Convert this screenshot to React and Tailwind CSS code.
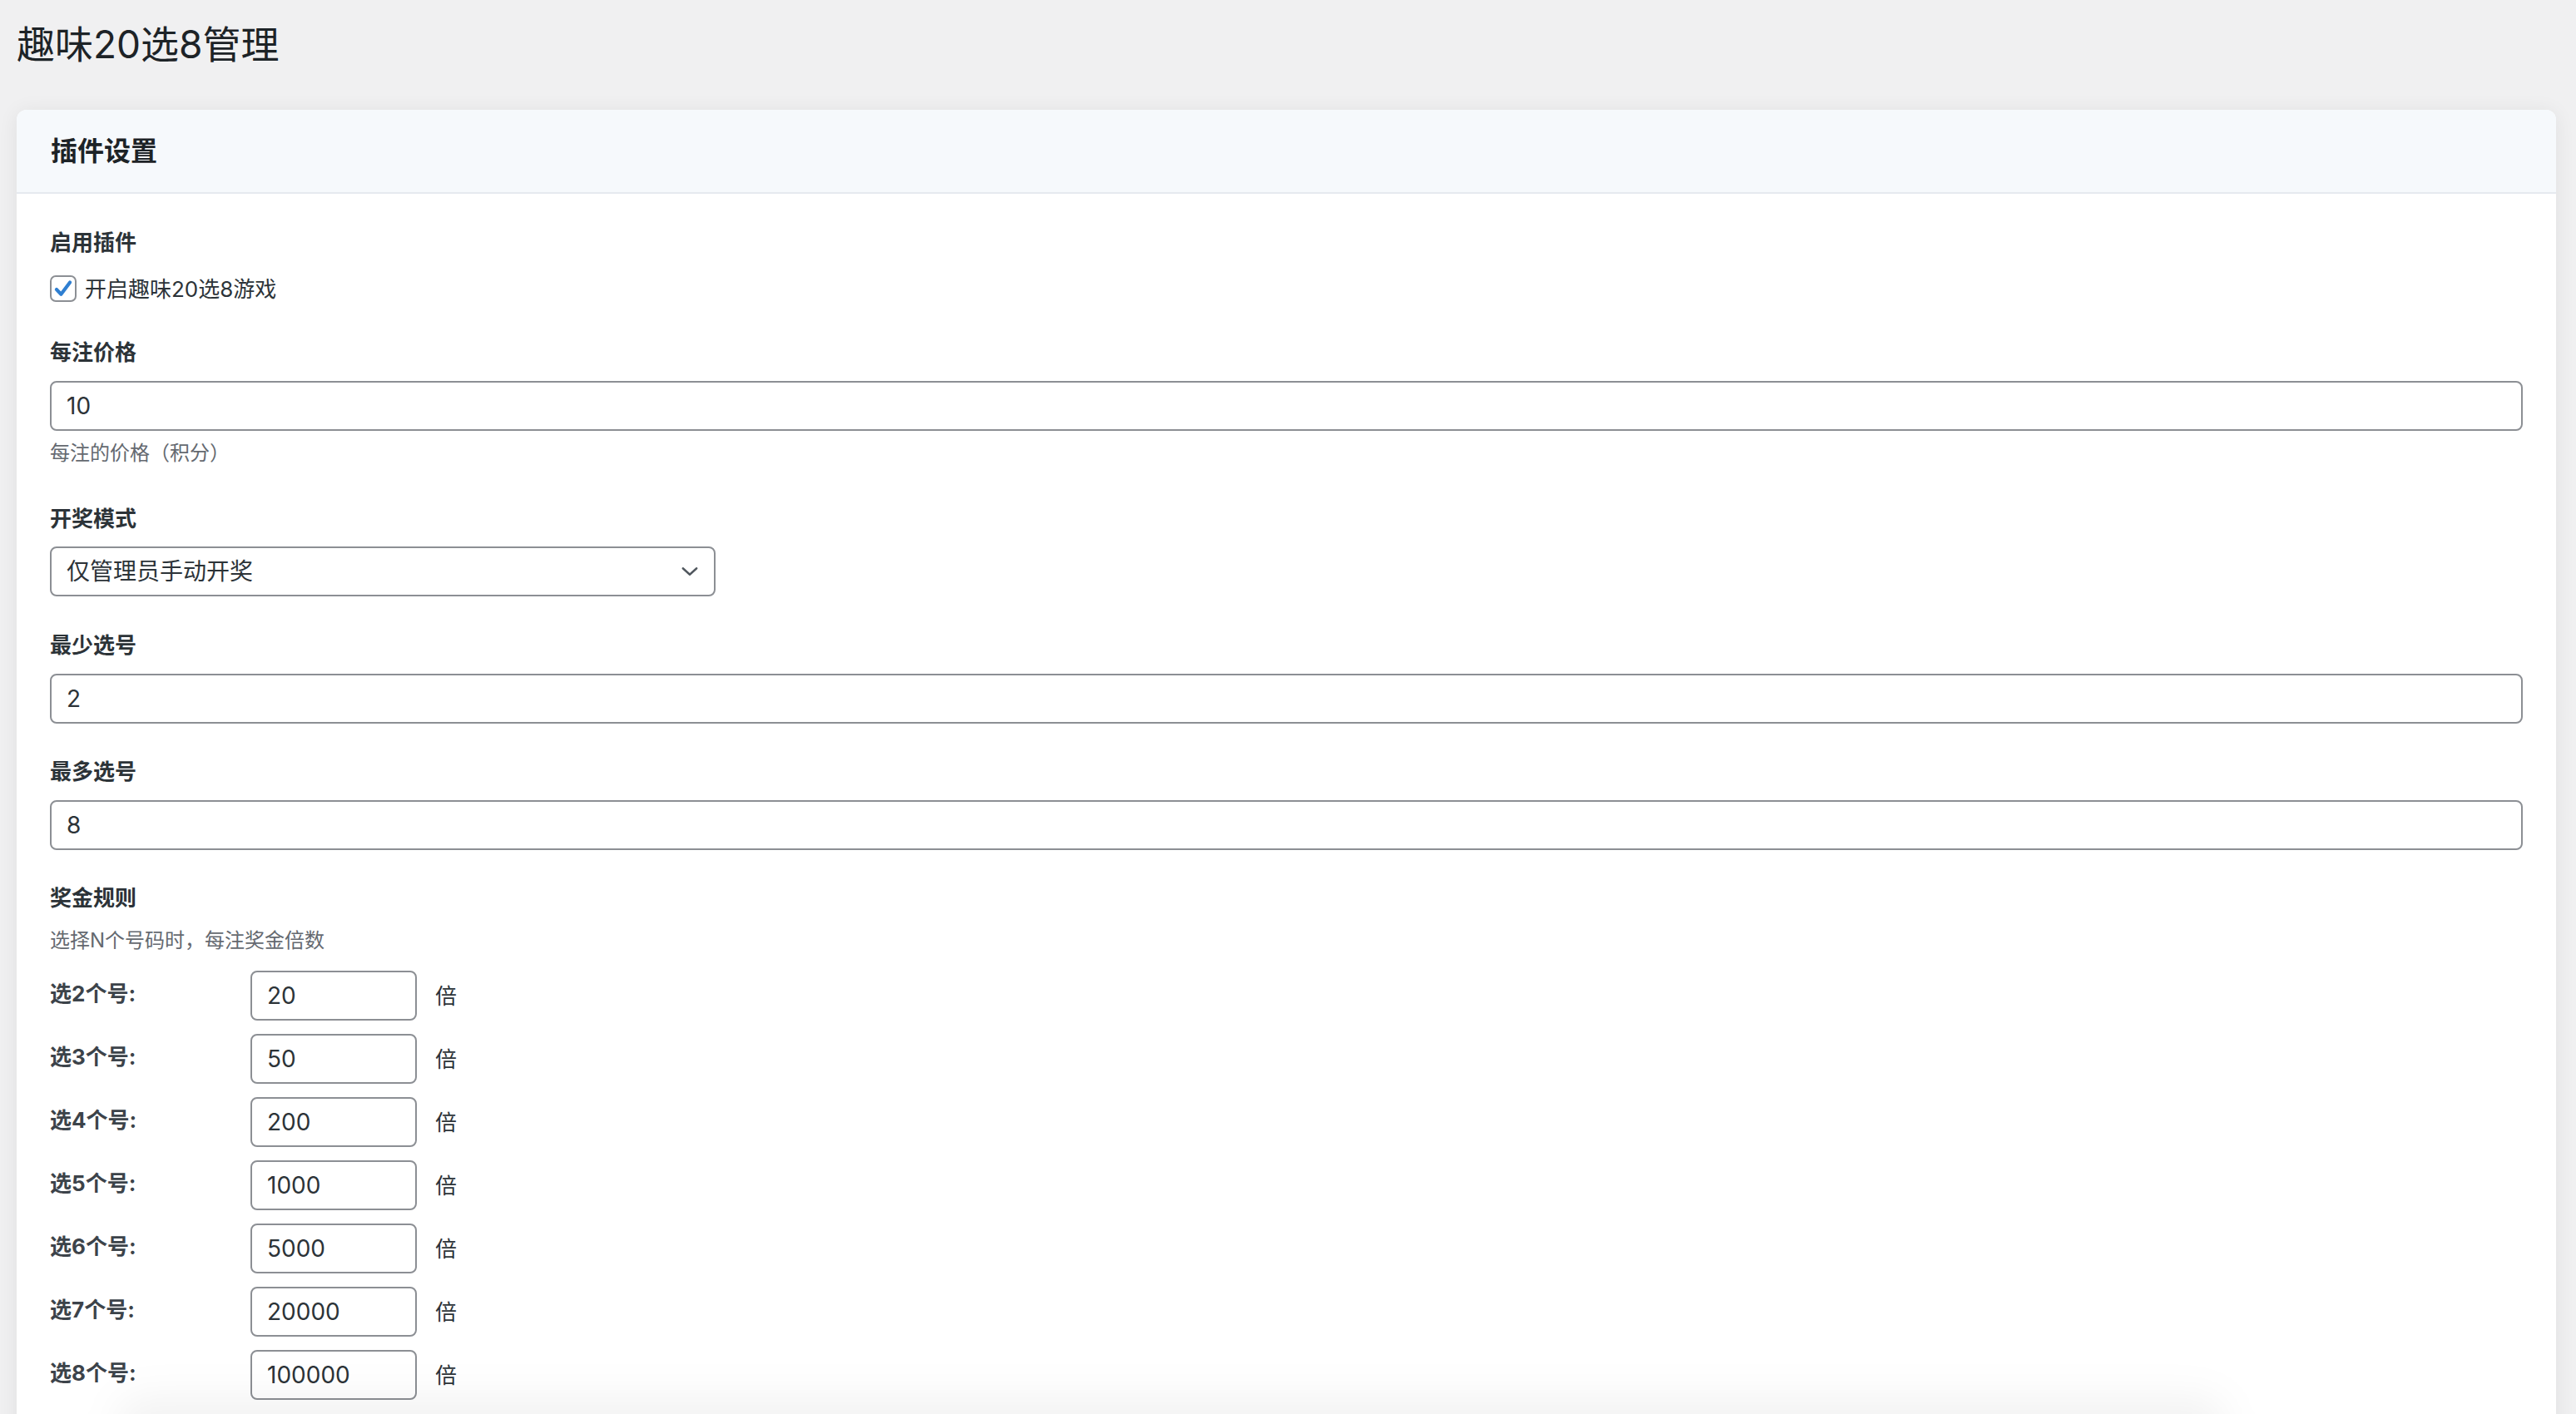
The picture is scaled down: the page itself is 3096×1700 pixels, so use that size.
import React from 'react';

const font = { fontFamily: 'Inter, "Noto Sans CJK SC", sans-serif' };

const prizeRows = [
  { n: 2, value: '20' },
  { n: 3, value: '50' },
  { n: 4, value: '200' },
  { n: 5, value: '1000' },
  { n: 6, value: '5000' },
  { n: 7, value: '20000' },
  { n: 8, value: '100000' },
];

const Label = ({ children }) => (
  <div className="text-[26px] leading-[36px] font-bold text-[#2c3338]">{children}</div>
);

const TextInput = ({ value, className = '' }) => (
  <div
    className={`h-[60px] flex items-center px-[18px] border-2 border-[#8c8f94] rounded-[8px] bg-white text-[28px] text-[#2c3338] ${className}`}
  >
    {value}
  </div>
);

const App = () => {
  return (
    <div className="relative min-h-screen overflow-hidden bg-[#f0f0f1] pl-[20px] pr-[24px] pt-[26px]" style={font}>
      <h1 className="text-[46px] leading-[54px] font-normal text-[#1d2327]">趣味20选8管理</h1>

      <div className="mt-[52px] bg-white rounded-[12px] shadow-[0_2px_24px_rgba(0,0,0,0.07)] pb-[60px]">
        {/* card header */}
        <div className="h-[101px] flex items-center px-[41px] bg-[#f6f9fc] border-b-2 border-[#e6eaef] rounded-t-[12px]">
          <span className="text-[32px] font-bold text-[#1d2327]">插件设置</span>
        </div>

        <div className="pt-[41px] px-[40px]">
          {/* enable */}
          <Label>启用插件</Label>
          <div className="mt-[19px] h-[36px] flex items-center gap-[10px]">
            <div className="w-[32px] h-[32px] border-2 border-[#8c8f94] rounded-[7px] bg-white flex items-center justify-center">
              <svg width="26" height="26" viewBox="0 0 20 20">
                <path d="M3.8 10.8 L8 15.2 L16.2 4.2" fill="none" stroke="#2f7fd1" strokeWidth="3.2" strokeLinecap="round" strokeLinejoin="round" />
              </svg>
            </div>
            <span className="text-[26px] text-[#2c3338]">开启趣味20选8游戏</span>
          </div>

          {/* price */}
          <div className="mt-[41px]">
            <Label>每注价格</Label>
            <TextInput value="10" className="mt-[16px]" />
            <div className="mt-[9px] text-[24px] leading-[36px] text-[#646970]">每注的价格（积分）</div>
          </div>

          {/* draw mode */}
          <div className="mt-[43px]">
            <Label>开奖模式</Label>
            <div className="mt-[15px] w-[800px] h-[60px] flex items-center justify-between pl-[18px] pr-[14px] border-2 border-[#8c8f94] rounded-[8px] bg-white text-[28px] text-[#2c3338]">
              <span>仅管理员手动开奖</span>
              <svg width="30" height="30" viewBox="0 0 20 20">
                <path d="M4.5 7.5 L10 12.5 L15.5 7.5" fill="none" stroke="#50575e" strokeWidth="1.6" strokeLinecap="round" strokeLinejoin="round" />
              </svg>
            </div>
          </div>

          {/* min picks */}
          <div className="mt-[41px]">
            <Label>最少选号</Label>
            <TextInput value="2" className="mt-[16px]" />
          </div>

          {/* max picks */}
          <div className="mt-[40px]">
            <Label>最多选号</Label>
            <TextInput value="8" className="mt-[16px]" />
          </div>

          {/* prize rules */}
          <div className="mt-[40px]">
            <Label>奖金规则</Label>
            <div className="mt-[15px] text-[24px] leading-[36px] text-[#646970]">选择N个号码时，每注奖金倍数</div>
            <div className="mt-[18px] flex flex-col gap-[16px]">
              {prizeRows.map((row) => (
                <div key={row.n} className="flex items-center h-[60px]">
                  <div className="w-[241px] text-[26px] font-bold text-[#3c434a] -mt-[6px]">选{row.n}个号:</div>
                  <TextInput value={row.value} className="w-[200px]" />
                  <span className="ml-[22px] text-[26px] text-[#2c3338]">倍</span>
                </div>
              ))}
            </div>
          </div>
        </div>
      </div>

      <div className="pointer-events-none absolute left-[140px] right-[420px] top-[1680px] h-[70px] rounded-full bg-black/[0.05] blur-[24px]" />
    </div>
  );
};

export default App;
